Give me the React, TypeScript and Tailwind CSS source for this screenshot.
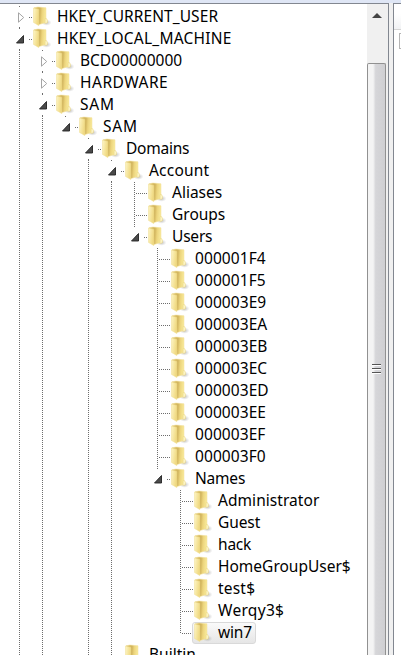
import React from "react";

type Node = {
  label: string;
  depth: number;
  state?: "open" | "closed";
  // Columns (by depth) whose branch line passes straight through the row.
  rails: number[];
  last?: boolean;
  selected?: boolean;
  tracking?: string;
};

const deep = [0, 1, 3, 4];

const nodes: Node[] = [
  { label: "HKEY_CURRENT_USER", depth: 0, state: "closed", rails: [], tracking: "tracking-[0.08px]" },
  { label: "HKEY_LOCAL_MACHINE", depth: 0, state: "open", rails: [], tracking: "tracking-[0.22px]" },
  { label: "BCD00000000", depth: 1, state: "closed", rails: [0] },
  { label: "HARDWARE", depth: 1, state: "closed", rails: [0], tracking: "tracking-[0.5px]" },
  { label: "SAM", depth: 1, state: "open", rails: [0], tracking: "tracking-[0.8px]" },
  { label: "SAM", depth: 2, state: "open", rails: [0, 1], last: true, tracking: "tracking-[0.8px]" },
  { label: "Domains", depth: 3, state: "open", rails: [0, 1], tracking: "tracking-[-0.25px]" },
  { label: "Account", depth: 4, state: "open", rails: [0, 1, 3], tracking: "tracking-[0.2px]" },
  { label: "Aliases", depth: 5, rails: deep },
  { label: "Groups", depth: 5, rails: deep },
  { label: "Users", depth: 5, state: "open", rails: deep, last: true, tracking: "tracking-[-0.2px]" },
  ...["000001F4", "000001F5", "000003E9", "000003EA", "000003EB", "000003EC", "000003ED", "000003EE", "000003EF", "000003F0"].map(
    (label) => ({ label, depth: 6, rails: deep, tracking: "tracking-[0.08px]" }),
  ),
  { label: "Names", depth: 6, state: "open", rails: deep, last: true, tracking: "tracking-[-0.2px]" },
  { label: "Administrator", depth: 7, rails: deep, tracking: "tracking-[0.05px]" },
  { label: "Guest", depth: 7, rails: deep, tracking: "tracking-[-0.1px]" },
  { label: "hack", depth: 7, rails: deep, tracking: "tracking-[-0.2px]" },
  { label: "HomeGroupUser$", depth: 7, rails: deep },
  { label: "test$", depth: 7, rails: deep, tracking: "tracking-[0.2px]" },
  { label: "Werqy3$", depth: 7, rails: deep, tracking: "tracking-[0.3px]" },
  { label: "win7", depth: 7, rails: deep, last: true, selected: true, tracking: "tracking-[-0.2px]" },
  { label: "Builtin", depth: 4, rails: [0, 1, 3] },
];

const Defs = () => (
  <svg className="absolute h-0 w-0" aria-hidden="true">
    <defs>
      <linearGradient id="back" x1="0" x2="1" y1="0" y2="0.1">
        <stop offset="0.3" stopColor="#d9bd63" />
        <stop offset="0.5" stopColor="#d0b35c" />
        <stop offset="0.7" stopColor="#ecd47c" />
        <stop offset="1" stopColor="#f8e999" />
      </linearGradient>
      <linearGradient id="front" x1="0" x2="1" y1="0" y2="0.4">
        <stop offset="0" stopColor="#fdf5c6" />
        <stop offset="1" stopColor="#f0d980" />
      </linearGradient>
      <radialGradient id="shade">
        <stop offset="0" stopColor="#8e8e8e" stopOpacity="0.6" />
        <stop offset="1" stopColor="#aaaaaa" stopOpacity="0" />
      </radialGradient>
    </defs>
  </svg>
);

const Folder = () => (
  <svg className="h-[22px] w-5 shrink-0" viewBox="0 0 20 22">
    <ellipse cx="13.5" cy="16.6" rx="5" ry="3.2" fill="url(#shade)" />
    <path d="M1 1.8 5 1 13 1.8V16.6L5 18.8z" fill="url(#back)" stroke="#f0df98" strokeWidth=".5" />
    <path d="M.5 2 5.8 3.4V19.6L.5 16.4z" fill="url(#front)" stroke="#f0de93" strokeWidth=".5" />
    <path d="M12.2 12.4q2-.2 2.2 1.8v2.6l-2.4.6z" fill="#fdf6c8" stroke="#e8d27a" strokeWidth=".5" />
  </svg>
);

const Rail = ({ from, to }: { from: number; to: number }) => (
  <line x1="9.5" x2="9.5" y1={from} y2={to} stroke="#6d6d6d" strokeDasharray="1 1" />
);

const Branch = ({ node }: { node: Node }) => (
  <svg className="h-[22px] w-[23px] shrink-0" viewBox="0 0 23 22" shapeRendering="crispEdges">
    {node.state ? (
      <>
        <Rail from={0} to={1} />
        {!node.last && <Rail from={21} to={22} />}
        <line x1="19" x2="23" y1="11.5" y2="11.5" stroke="#6d6d6d" strokeDasharray="1 1" />
        <g shapeRendering="auto">
          {node.state === "open" ? (
            <path d="M13.5 7.5V15H6.5z" fill="#4a4a4a" stroke="#222" strokeWidth=".9" />
          ) : (
            <path d="M8.5 6.8 13.7 11.5 8.5 16.2z" fill="#fff" stroke="#a5a5a5" />
          )}
        </g>
      </>
    ) : (
      <>
        <Rail from={0} to={node.last ? 12 : 22} />
        <line x1="11" x2="23" y1="11.5" y2="11.5" stroke="#6d6d6d" strokeDasharray="1 1" />
      </>
    )}
  </svg>
);

const Row = ({ node }: { node: Node }) => (
  <div className="flex h-[22px] shrink-0 items-center">
    {Array.from({ length: node.depth }, (_, column) => (
      <svg key={column} className="h-[22px] w-[23px] shrink-0" viewBox="0 0 23 22" shapeRendering="crispEdges">
        {node.rails.includes(column) && <Rail from={0} to={22} />}
      </svg>
    ))}
    <Branch node={node} />
    <div
      className={
        node.selected
          ? "-ml-0.5 flex h-[22px] items-center rounded-[3px] border border-[#d9d9d9] bg-linear-to-b from-[#fafafa] to-[#e6e6e6] pr-[3px] pl-px"
          : "flex items-center"
      }
    >
      <Folder />
      <span className={`ml-[4px] h-[22px] text-[15.5px] leading-[20px] whitespace-pre text-black ${node.tracking ?? ""}`}>
        {node.label}
      </span>
    </div>
  </div>
);

const ScrollBar = () => (
  <div className="flex w-[21px] shrink-0 flex-col bg-[#f0f0f0] pr-[2px]">
    <div className="flex h-[59px] shrink-0 justify-center pt-[9px]">
      <svg className="h-[6px] w-[10px]" viewBox="0 0 10 6">
        <path d="M5 0 10 5H0z" fill="#444" />
      </svg>
    </div>
    <div className="flex grow items-center justify-center rounded-t-[2px] border border-b-0 border-[#919191] bg-linear-to-r from-[#f4f4f4] from-30% via-[#d6d6d9] via-45% to-[#cfcfd2]">
      <div className="mb-[-18px] flex flex-col gap-[2px]">
        {[0, 1, 2].map((bar) => (
          <div key={bar} className="h-[2px] w-[9px] border-b border-white bg-[#555]" />
        ))}
      </div>
    </div>
  </div>
);

export default function App() {
  return (
    <div className="h-[655px] w-[401px] overflow-hidden bg-[#f0f0f0] font-['Noto_Sans',sans-serif]">
      <Defs />
      <div className="h-[3px] bg-[#dfe6f5]" />
      <div className="flex h-[652px] gap-[4px]">
        <div className="flex w-[389px] shrink-0 overflow-hidden border-t border-r border-[#828790] bg-white">
          <div className="flex grow flex-col overflow-hidden pt-[2px] pl-[10px]">
            {nodes.map((node, index) => (
              <Row key={index} node={node} />
            ))}
          </div>
          <ScrollBar />
        </div>
        <div className="grow border-t border-l border-[#828790] bg-white pt-[10px]">
          <div className="h-[16px] border-b border-[#d5d5d5] bg-linear-to-b from-white to-[#f1f2f4]" />
          <div className="mt-[3px] ml-[5px] h-[16px] border border-r-0 border-[#b5b5b5]" />
        </div>
      </div>
    </div>
  );
}
